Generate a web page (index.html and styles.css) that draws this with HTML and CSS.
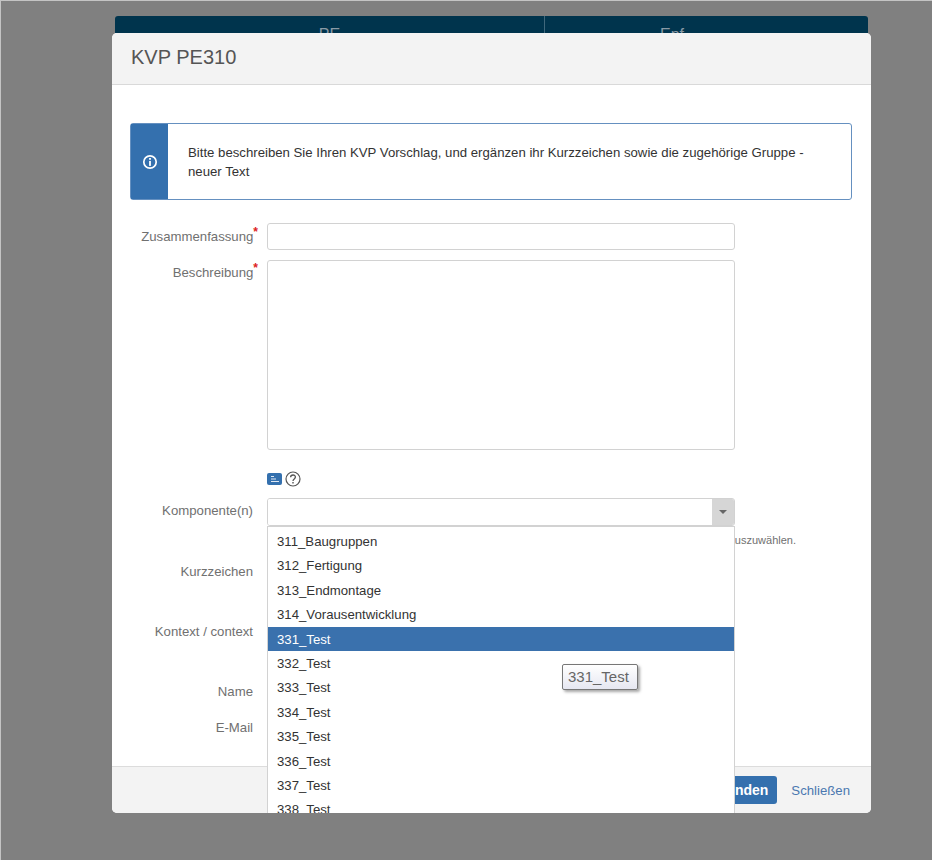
FILE: index.html
```html
<!DOCTYPE html>
<html lang="de">
<head>
    <meta charset="UTF-8">
    <title>KVP PE310</title>
    <link rel="stylesheet" href="styles.css">
</head>
<body>
<div class="page">
    <!--Tabelle hinter dem Dialog-->
    <div class="back-bar">
        <div class="back-cell first">PE</div>
        <div class="back-cell second">Enf</div>
    </div>

    <div class="modal">
        <div class="modal-head">KVP PE310</div>

        <div class="modal-body">
            <div class="alert">
                <div class="alert-icon">
                    <svg width="16" height="16" viewBox="0 0 16 16">
                        <circle cx="8" cy="8" r="6.2" fill="none" stroke="#fff" stroke-width="1.7"/>
                        <rect x="7.1" y="4" width="1.8" height="1.8" fill="#fff"/>
                        <rect x="7.1" y="6.9" width="1.8" height="5" fill="#fff"/>
                    </svg>
                </div>
                <div class="alert-text">Bitte beschreiben Sie Ihren KVP Vorschlag, und ergänzen ihr Kurzzeichen sowie die zugehörige Gruppe - neuer Text</div>
            </div>

            <div class="row row-summary">
                <label class="lbl">Zusammenfassung<sup class="req">*</sup></label>
                <input class="field" type="text">
            </div>
            <div class="row row-desc">
                <label class="lbl lbl-top">Beschreibung<sup class="req">*</sup></label>
                <textarea class="field area"></textarea>
            </div>
            <div class="row row-tools">
                <div class="lbl"></div>
                <div class="tools">
                    <span class="tool-btn">
                        <svg width="8" height="6" viewBox="0 0 8 6">
                            <rect x="0" y="0" width="3" height="1" fill="#dfe8f3"/>
                            <rect x="0" y="2.5" width="5" height="1" fill="#dfe8f3"/>
                            <rect x="0" y="5" width="8" height="1" fill="#dfe8f3"/>
                        </svg>
                    </span>
                    <svg class="help" width="16" height="16" viewBox="0 0 16 16">
                        <circle cx="8" cy="8" r="7" fill="none" stroke="#555" stroke-width="1.2"/>
                        <path d="M5.6 6.2 C5.7 3.3 10.4 3.3 10.4 6.1 C10.4 7.9 8 7.9 8 9.9" fill="none" stroke="#555" stroke-width="1.3"/>
                        <rect x="7.3" y="11" width="1.4" height="1.5" fill="#555"/>
                    </svg>
                </div>
            </div>
            <div class="row row-combo">
                <label class="lbl lbl-combo">Komponente(n)</label>
                <div class="combo">
                    <input class="combo-input" type="text">
                    <span class="combo-btn"><i class="caret"></i></span>
                </div>
            </div>
            <div class="row row-hint">
                <div class="lbl"></div>
                <div class="hint">Beginnen Sie mit der Eingabe, um eine Liste möglicher Werte zu erhalten und auszuwählen.</div>
            </div>
            <div class="row row-short">
                <label class="lbl">Kurzzeichen</label>
                <input class="field" type="text">
            </div>
            <div class="row row-context">
                <label class="lbl">Kontext / context</label>
                <input class="field" type="text">
            </div>
            <div class="row row-name">
                <label class="lbl">Name</label>
                <input class="field" type="text">
            </div>
            <div class="row row-mail">
                <label class="lbl">E-Mail</label>
                <input class="field" type="text">
            </div>
        </div>

        <div class="modal-foot">
            <a href="#" class="btn-send">Senden</a>
            <a href="#" class="btn-close">Schließen</a>
        </div>

        <!--geöffnete Auswahlliste-->
        <ul class="drop">
            <li>311_Baugruppen</li>
            <li>312_Fertigung</li>
            <li>313_Endmontage</li>
            <li>314_Vorausentwicklung</li>
            <li class="current">331_Test</li>
            <li>332_Test</li>
            <li>333_Test</li>
            <li>334_Test</li>
            <li>335_Test</li>
            <li>336_Test</li>
            <li>337_Test</li>
            <li>338_Test</li>
            <li>339_Test</li>
        </ul>
        <div class="tip">331_Test</div>
    </div>
</div>
</body>
</html>
```

FILE: styles.css
```css
*{
    box-sizing: border-box;
}
html,body{
    margin: 0;
    height: 100%;
}
body{
    background-color: #808080;
    font-family: "Liberation Sans", Arial, sans-serif;
    font-size: 13.2px;
    color: #333;
    overflow: hidden;
}
.page{
    width: 932px;
    height: 860px;
    padding: 16px 0 0 112px;
    box-shadow: inset 1px 1px 0 #c4c4c4;
}
.back-bar{
    display: flex;
    width: 753px;
    height: 17px;
    margin-left: 3px;
    overflow: hidden;
    background-color: #00344d;
    border-radius: 3px 3px 0 0;
    color: #8a9aa5;
    font-size: 16px;
}
.back-cell{
    padding-top: 10px;
}
.back-cell.first{
    width: 430px;
    text-align: center;
    border-right: 1px solid #40687c;
}
.back-cell.second{
    flex: 1;
    padding-left: 115px;
}
.modal{
    position: relative;
    width: 759px;
    height: 780px;
    overflow: hidden;
    background-color: #fff;
    border-radius: 5px;
}
.modal-head{
    height: 52px;
    padding: 13px 19px 0;
    background-color: #f3f3f3;
    border-bottom: 1px solid #d9d9d9;
    font-size: 20px;
    line-height: 23px;
    color: #555;
}
.modal-body{
    height: 681px;
    padding: 38px 19px 0 18px;
}
.alert{
    display: flex;
    height: 77px;
    margin-bottom: 23px;
    border: 1px solid #6590c0;
    border-radius: 3px;
}
.alert-icon{
    display: flex;
    align-items: center;
    justify-content: center;
    width: 37px;
    background-color: #3470ae;
}
.alert-text{
    flex: 1;
    padding: 19px 40px 0 20px;
    line-height: 19px;
    color: #333;
}
.row{
    display: flex;
    align-items: center;
}
.lbl{
    width: 123px;
    margin-right: 14px;
    text-align: right;
    color: #707070;
}
.lbl-top{
    align-self: flex-start;
    padding-top: 5px;
}
.lbl-combo{
    padding-bottom: 4px;
}
.req{
    margin-right: -5px;
    font-size: 12px;
    font-weight: bold;
    line-height: 0;
    color: #d22;
}
.field{
    display: block;
    width: 468px;
    height: 27px;
    padding: 4px 8px;
    border: 1px solid #d2d2d2;
    border-radius: 3px;
    background-color: #fff;
    font: inherit;
}
.area{
    height: 190px;
    resize: none;
}
.row-desc{
    margin-top: 10px;
}
.row-tools{
    margin-top: 21px;
}
.tools{
    display: flex;
    align-items: center;
    gap: 3px;
    height: 16px;
}
.tool-btn{
    display: flex;
    align-items: center;
    justify-content: center;
    width: 15px;
    height: 12px;
    background-color: #3470ae;
    border-radius: 2px;
}
.row-combo{
    margin-top: 11px;
}
.combo{
    display: flex;
    width: 468px;
    height: 28px;
    border: 1px solid #d2d2d2;
    border-radius: 3px;
    overflow: hidden;
}
.combo-input{
    flex: 1;
    border: 0;
}
.combo-btn{
    display: flex;
    align-items: center;
    justify-content: center;
    width: 22px;
    background-color: #d6d6d6;
}
.caret{
    width: 0;
    height: 0;
    border-top: 4px solid #666;
    border-left: 4px solid transparent;
    border-right: 4px solid transparent;
}
.row-hint{
    height: 14px;
    margin-top: 7px;
}
.hint{
    width: 529px;
    font-size: 11px;
    line-height: 14px;
    white-space: nowrap;
    text-align: right;
    color: #707070;
}
.row-short{
    margin-top: 11px;
}
.row-context{
    margin-top: 33px;
}
.row-name{
    margin-top: 33px;
}
.row-mail{
    margin-top: 9px;
}
.modal-foot{
    display: flex;
    align-items: center;
    justify-content: flex-end;
    gap: 14px;
    height: 47px;
    padding: 0 21px 0 0;
    background-color: #f3f3f3;
    border-top: 1px solid #dcdcdc;
}
.btn-send{
    padding: 5px 9px;
    height: 28px;
    line-height: 18px;
    background-color: #3470ae;
    border-radius: 3px;
    color: #fff;
    font-weight: bold;
    font-size: 14px;
    text-decoration: none;
}
.btn-close{
    color: #4a78b0;
    text-decoration: none;
}
.drop{
    position: absolute;
    top: 493px;
    left: 155px;
    width: 468px;
    height: 300px;
    margin: 0;
    padding: 2px 0 0;
    list-style-type: none;
    background-color: #fff;
    border: 1px solid #d2d2d2;
}
.drop li{
    height: 24.4px;
    padding: 1px 0 0 9px;
    line-height: 23.4px;
    color: #333;
}
.drop li.current{
    background-color: #3a71ad;
    color: #fff;
}
.tip{
    position: absolute;
    top: 631px;
    left: 450px;
    width: 76px;
    height: 26px;
    padding-left: 5px;
    line-height: 24px;
    font-size: 15px;
    color: #666;
    background: linear-gradient(#fff, #e6e7f1);
    border: 1px solid #777;
    border-radius: 2px;
    box-shadow: 2px 2px 3px rgba(0,0,0,.35);
}
```
